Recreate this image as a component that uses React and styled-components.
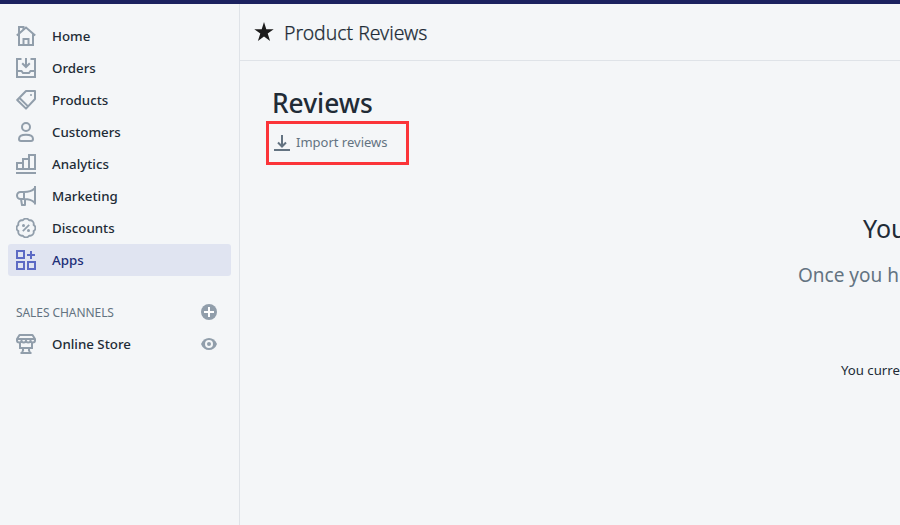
import React from "react";
import styled, { createGlobalStyle } from "styled-components";

const Global = createGlobalStyle`
  * { box-sizing: border-box; }
  body {
    margin: 0;
    overflow: hidden;
    background: #f4f6f8;
    font-family: "Noto Sans", "Open Sans", sans-serif;
    color: #212b36;
  }
  h1, h2, p { margin: 0; font-weight: 400; white-space: nowrap; }
`;

const Page = styled.div`
  height: 525px;
  display: grid;
  grid-template-columns: 240px 660px;
  grid-template-rows: 4px 521px;
  overflow: hidden;
`;

const TopBar = styled.div`
  grid-column: 1 / -1;
  background: #1c2260;
`;

const Sidebar = styled.nav`
  border-right: 1px solid #dfe3e8;
  padding: 16px 8px 0;
`;

const NavItem = styled.div`
  height: 32px;
  display: flex;
  align-items: center;
  padding: 0 12px 0 8px;
  border-radius: 3px;
  font-size: 13.3px;
  font-weight: 500;
  color: ${(p) => (p.$active ? "#202e78" : "#212b36")};
  background: ${(p) => (p.$active ? "#e0e4f1" : "transparent")};
`;

const NavIcon = styled.svg`
  width: 20px;
  height: 20px;
  margin-right: 16px;
  flex: none;
  fill: none;
  stroke: ${(p) => (p.$active ? "#5c6ac4" : "#919eab")};
  stroke-width: 2;
`;

const NavLabel = styled.span`
  flex: 1;
`;

const SectionHeading = styled.div`
  height: 32px;
  margin-top: 20px;
  padding: 0 14px 0 8px;
  display: flex;
  align-items: center;
  justify-content: space-between;
  font-size: 12px;
  letter-spacing: -0.07px;
  color: #637381;
`;

const ActionIcon = styled.svg`
  width: 16px;
  height: 16px;
  flex: none;
  display: block;
`;

const EyeSlot = styled.span`
  margin-right: 2px;
`;

const Main = styled.main`
  min-width: 0;
  overflow: hidden;
`;

const AppHeader = styled.header`
  height: 57px;
  display: flex;
  align-items: center;
  padding-left: 14px;
  border-bottom: 1px solid #dfe3e8;
`;

const StarIcon = styled.svg`
  width: 20px;
  height: 20px;
  margin-right: 10px;
`;

const AppName = styled.h2`
  font-size: 19.4px;
  line-height: 28px;
  padding-top: 1px;
  font-weight: 300;
  -webkit-text-stroke: 0.25px #212b36;
  color: #212b36;
`;

const Content = styled.section`
  padding-top: 24px;
`;

const Title = styled.h1`
  padding-left: 32px;
  font-size: 26.3px;
  line-height: 36px;
  font-weight: 500;
`;

const ImportBox = styled.div`
  width: 143px;
  height: 44px;
  margin-left: 26px;
  border: 3px solid #fb3439;
  display: flex;
  align-items: center;
  padding: 0 0 2px 5px;
  font-size: 13px;
  color: #637381;
`;

const ImportIcon = styled.svg`
  width: 16px;
  height: 16px;
  margin: 1px 6px 0 0;
`;

const EmptyState = styled.div`
  margin-top: 45px;
`;

const EmptyTitle = styled.p`
  padding-left: 623px;
  font-size: 25px;
  line-height: 36px;
`;

const EmptyText = styled.p`
  padding: 11px 0 0 558px;
  font-size: 19px;
  line-height: 36px;
  color: #637381;
`;

const Footnote = styled.p`
  padding: 67px 0 0 601px;
  font-size: 13.2px;
  line-height: 20px;
`;

const drawings = {
  home: (
    <>
      <path d="M.8 9.600 10 1.500l9.200 8.100M3 8v11h14V8" />
      <path d="M7.500 19v-6h5v6M3 8V1h4.500v2.500" />
    </>
  ),
  orders: (
    <>
      <path d="M5.500 1H1v18h18V1h-4.500M1 13h4.500l1.500 2h6l1.500-2H19" />
      <path d="M10 0v9M6.200 5.200 10 9l3.800-3.800" />
    </>
  ),
  products: (
    <>
      <path d="M10 1h9v8L10 18.600 1.200 10zM3.500 8l8.800 8.600" strokeLinejoin="round" />
      <circle cx="15" cy="5" r="1" fill="#919eab" stroke="none" />
    </>
  ),
  customers: (
    <>
      <circle cx="10" cy="5" r="4" />
      <path d="M3 17c0-3 3-4.300 7-4.300s7 1.300 7 4.300c0 1.300-.6 2-2 2H5c-1.400 0-2-.7-2-2z" />
    </>
  ),
  analytics: <path d="M0 19h20M1 15V9h6v6M7 15V5h6v10M13 15V1h6v14M0 15h20" />,
  marketing: (
    <path
      d="M19 0v18.500M18.500 2.500C16 5 12.500 6 8 6H4.500a3.500 3.500 0 0 0 0 7H8c4.500 0 8 1 10.500 3.500M8 6v7M5 13l1 6h3v-5.500"
      strokeWidth="2"
      strokeLinejoin="round"
    />
  ),
  discounts: (
    <>
      <path
        d="M6.860 2.410A3.600 3.600 0 0 1 13.140 2.410A3.600 3.600 0 0 1 17.590 6.860A3.600 3.600 0 0 1 17.590 13.140A3.600 3.600 0 0 1 13.140 17.590A3.600 3.600 0 0 1 6.860 17.590A3.600 3.600 0 0 1 2.410 13.140A3.600 3.600 0 0 1 2.410 6.860A3.600 3.600 0 0 1 6.860 2.410z"
        strokeLinejoin="round"
        strokeWidth="1.800"
      />
      <path d="M6.800 13.200l6.400-6.400" strokeWidth="1.700" />
      <g fill="#919eab" stroke="none">
        <circle cx="7.500" cy="7.500" r="1.500" />
        <circle cx="12.500" cy="12.500" r="1.500" />
      </g>
    </>
  ),
  apps: <path d="M1 1h7v7H1zM1 12h7v7H1zM12 12h7v7h-7zM15 1v8M11 5h8" />,
  store: (
    <>
      <path d="M3.500 1h13L19 5v1.500c0 2.700-4.500 2.700-4.500 0 0 2.700-4.500 2.700-4.500 0 0 2.700-4.500 2.700-4.500 0C5.500 9.200 1 9.200 1 6.500V5z" strokeLinejoin="round" />
      <path d="M1 5h18M4 8.500V14h12V8.500M7 14v3M13 14v3M4.500 19h11M6 18l1.500-2M14 18l-1.500-2" />
    </>
  ),
};

const items = [
  ["home", "Home"],
  ["orders", "Orders"],
  ["products", "Products"],
  ["customers", "Customers"],
  ["analytics", "Analytics"],
  ["marketing", "Marketing"],
  ["discounts", "Discounts"],
  ["apps", "Apps"],
];

function NavRow({ icon, label, active, children }) {
  return (
    <NavItem $active={active}>
      <NavIcon $active={active} viewBox="0 0 20 20">{drawings[icon]}</NavIcon>
      <NavLabel>{label}</NavLabel>
      {children}
    </NavItem>
  );
}

export default function App() {
  return (
    <Page>
      <Global />
      <TopBar />
      <Sidebar>
        {items.map(([icon, label]) => (
          <NavRow key={icon} icon={icon} label={label} active={icon === "apps"} />
        ))}
        <SectionHeading>
          <span>SALES CHANNELS</span>
          <ActionIcon viewBox="0 0 16 16">
            <circle cx="8" cy="8" r="8" fill="#919eab" />
            <path d="M8 3v10M3 8h10" stroke="#fff" strokeWidth="2" />
          </ActionIcon>
        </SectionHeading>
        <NavRow icon="store" label="Online Store">
          <EyeSlot>
            <ActionIcon viewBox="0 0 16 16">
              <path d="M0 8c1.500-4 4.500-6 8-6s6.500 2 8 6c-1.500 4-4.500 6-8 6s-6.500-2-8-6z" fill="#919eab" />
              <circle cx="8" cy="8" r="3" fill="#919eab" stroke="#f4f6f8" strokeWidth="2" />
            </ActionIcon>
          </EyeSlot>
        </NavRow>
      </Sidebar>
      <Main>
        <AppHeader>
          <StarIcon viewBox="0 0 20 20">
            <path d="M10 0l2.300 7.200h7.400l-6 4.400 2.400 7.400L10 14.500 3.900 19l2.400-7.400-6-4.400h7.400z" fill="#1c1c1c" />
          </StarIcon>
          <AppName>Product Reviews</AppName>
        </AppHeader>
        <Content>
          <Title>Reviews</Title>
          <ImportBox>
            <ImportIcon viewBox="0 0 16 16" fill="none" stroke="#637381" strokeWidth="2">
              <path d="M8 0v11M4 7.500l4 4 4-4M0 15h16" />
            </ImportIcon>
            Import reviews
          </ImportBox>
          <EmptyState>
            <EmptyTitle>You</EmptyTitle>
            <EmptyText>Once you h</EmptyText>
            <Footnote>You curren</Footnote>
          </EmptyState>
        </Content>
      </Main>
    </Page>
  );
}
